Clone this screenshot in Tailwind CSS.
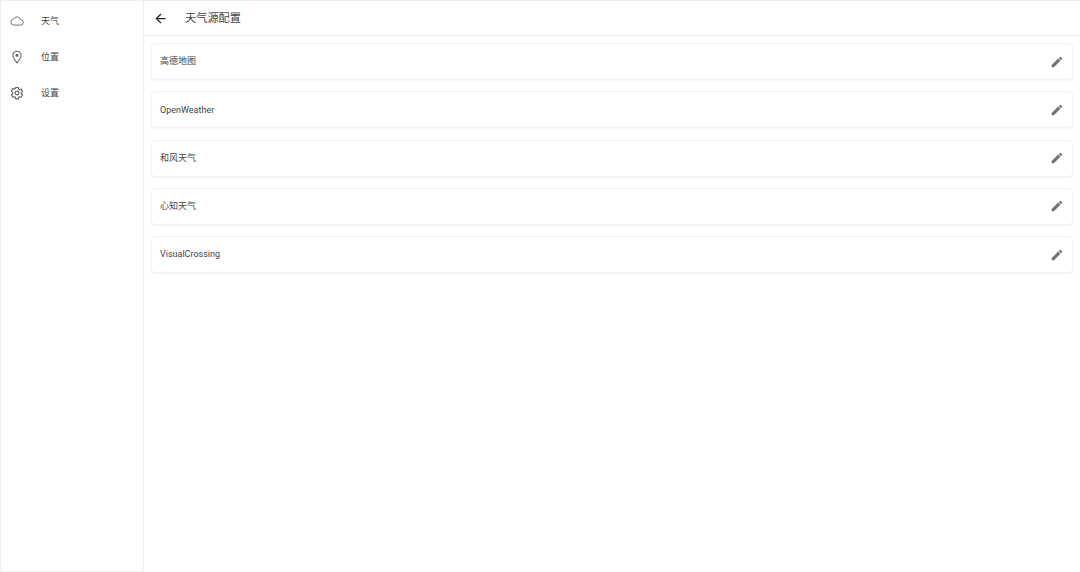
<!DOCTYPE html>
<html lang="zh-CN">
<head>
  <meta charset="UTF-8" />
  <title>天气源配置</title>
  <script src="https://cdn.jsdelivr.net/npm/@tailwindcss/browser@4"></script>
</head>
<body class="bg-white text-[#444] font-['Roboto','Noto_Sans_CJK_SC',sans-serif] h-[572px] w-[1080px] overflow-hidden flex">

  <!-- 侧边导航 -->
  <nav class="w-[144px] h-full shrink-0 border border-[#eeeeee] pt-[2px]">
    <div class="h-[36px] flex items-center pl-[9px] gap-[17px]">
      <svg class="w-[14px] h-[14px]" viewBox="0 0 24 24" fill="none" stroke="#666" stroke-width="1.6" stroke-linejoin="round"><path d="M6.5 19a5 5 0 0 1-.7-9.95A6.5 6.5 0 0 1 18 9.5a4.75 4.75 0 0 1 0 9.5z"/></svg>
      <span class="text-[9px] leading-none">天气</span>
    </div>
    <div class="h-[36px] flex items-center pl-[9px] gap-[17px]">
      <svg class="w-[14px] h-[14px]" viewBox="0 0 24 24" fill="none" stroke="#666" stroke-width="1.8"><path d="M12 22c-3.5-4.5-7-8.5-7-13a7 7 0 0 1 14 0c0 4.500-3.500 8.500-7 13z"/><circle cx="12" cy="9" r="1.800" fill="#666"/></svg>
      <span class="text-[9px] leading-none">位置</span>
    </div>
    <div class="h-[36px] flex items-center pl-[9px] gap-[17px]">
      <svg class="w-[14px] h-[14px]" viewBox="0 0 24 24" fill="none" stroke="#666" stroke-width="2" stroke-linejoin="round"><path d="M9.6 2.500h4.800l.5 2.900 1.500.9 2.800-1 2.400 4.200-2.300 1.900v1.800l2.300 1.900-2.400 4.200-2.800-1-1.500.9-.5 2.900H9.600l-.5-2.900-1.500-.9-2.800 1-2.400-4.200 2.300-1.900v-1.800L2.400 8.500l2.400-4.200 2.800 1 1.500-.9z"/><circle cx="12" cy="12" r="3.200"/></svg>
      <span class="text-[9px] leading-none">设置</span>
    </div>
  </nav>

  <main class="flex-1 min-w-0 flex flex-col">
    <!-- 顶栏 -->
    <header class="h-[36px] flex items-center border-y border-[#eeeeee] pl-[9px] pt-[1px]">
      <svg class="w-[15px] h-[15px] shrink-0" viewBox="0 0 24 24" fill="#222"><path d="M20 11H7.830l5.590-5.590L12 4l-8 8 8 8 1.410-1.410L7.830 13H20z"/></svg>
      <h1 class="ml-[17px] text-[11.200px] leading-none">天气源配置</h1>
    </header>

    <!-- 天气源列表 -->
    <div class="flex flex-col gap-[11.300px] pt-[7px] pl-[7px] pr-[7px]">
      <div class="h-[37px] rounded-[4px] border border-[#f2f2f2] shadow-[0_1px_2px_rgba(0,0,0,0.05)] flex items-center justify-between pl-[8px] pr-[8px]">
        <span class="text-[9px] pt-[1px]">高德地图</span>
        <svg class="w-[14px] h-[14px]" viewBox="0 0 24 24" fill="#707070"><path d="M3 17.250V21h3.750L17.810 9.940l-3.750-3.750zM20.710 7.040a1 1 0 0 0 0-1.410l-2.340-2.340a1 1 0 0 0-1.410 0l-1.830 1.830 3.750 3.750z"/></svg>
      </div>
      <div class="h-[37px] rounded-[4px] border border-[#f2f2f2] shadow-[0_1px_2px_rgba(0,0,0,0.05)] flex items-center justify-between pl-[8px] pr-[8px]">
        <span class="text-[9px] pt-[1px]">OpenWeather</span>
        <svg class="w-[14px] h-[14px]" viewBox="0 0 24 24" fill="#707070"><path d="M3 17.250V21h3.750L17.810 9.940l-3.750-3.750zM20.710 7.040a1 1 0 0 0 0-1.410l-2.340-2.340a1 1 0 0 0-1.410 0l-1.830 1.830 3.750 3.750z"/></svg>
      </div>
      <div class="h-[37px] rounded-[4px] border border-[#f2f2f2] shadow-[0_1px_2px_rgba(0,0,0,0.05)] flex items-center justify-between pl-[8px] pr-[8px]">
        <span class="text-[9px] pt-[1px]">和风天气</span>
        <svg class="w-[14px] h-[14px]" viewBox="0 0 24 24" fill="#707070"><path d="M3 17.250V21h3.750L17.810 9.940l-3.750-3.750zM20.710 7.040a1 1 0 0 0 0-1.410l-2.340-2.340a1 1 0 0 0-1.410 0l-1.830 1.830 3.750 3.750z"/></svg>
      </div>
      <div class="h-[37px] rounded-[4px] border border-[#f2f2f2] shadow-[0_1px_2px_rgba(0,0,0,0.05)] flex items-center justify-between pl-[8px] pr-[8px]">
        <span class="text-[9px] pt-[1px]">心知天气</span>
        <svg class="w-[14px] h-[14px]" viewBox="0 0 24 24" fill="#707070"><path d="M3 17.250V21h3.750L17.810 9.940l-3.750-3.750zM20.710 7.040a1 1 0 0 0 0-1.410l-2.340-2.340a1 1 0 0 0-1.410 0l-1.830 1.830 3.750 3.750z"/></svg>
      </div>
      <div class="h-[37px] rounded-[4px] border border-[#f2f2f2] shadow-[0_1px_2px_rgba(0,0,0,0.05)] flex items-center justify-between pl-[8px] pr-[8px]">
        <span class="text-[9px] pt-[1px]">VisualCrossing</span>
        <svg class="w-[14px] h-[14px]" viewBox="0 0 24 24" fill="#707070"><path d="M3 17.250V21h3.750L17.810 9.940l-3.750-3.750zM20.710 7.040a1 1 0 0 0 0-1.410l-2.340-2.340a1 1 0 0 0-1.410 0l-1.830 1.830 3.750 3.750z"/></svg>
      </div>
    </div>
  </main>

</body>
</html>
